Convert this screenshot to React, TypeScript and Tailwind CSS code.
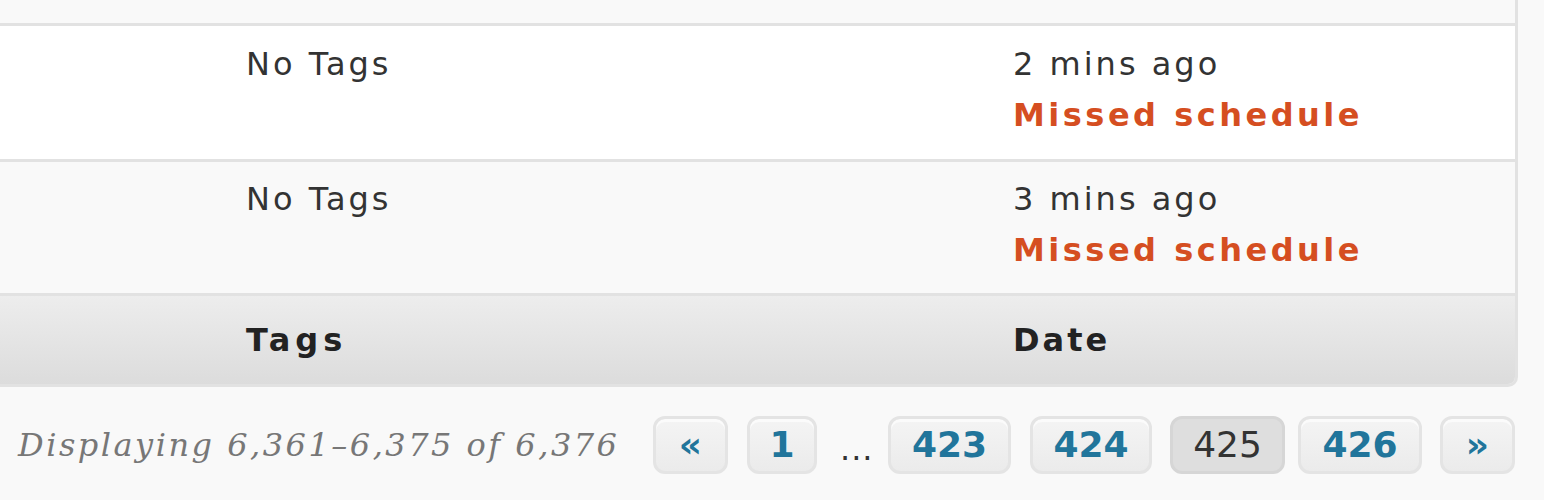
import React from "react";

const sans = "font-['DejaVu_Sans',sans-serif]";

function PageBtn({ label, w, current }: { label: string; w: string; current?: boolean }) {
  return (
    <span
      className={
        `${w} h-[58px] flex items-center justify-center rounded-[12px] border-[3px] text-[36px] leading-none ` +
        (current
          ? "bg-[#dedede] border-[#d6d6d6] text-[#333] font-normal"
          : "bg-gradient-to-b from-[#f4f4f4] to-[#ebebeb] border-[#e4e4e4] text-[#21759b] font-bold shadow-[inset_0_3px_0_#fbfbfb]")
      }
    >
      {label}
    </span>
  );
}

export default function App() {
  return (
    <div className={`w-[1544px] h-[500px] bg-[#f9f9f9] overflow-hidden ${sans} text-[#333]`}>
      <div className="w-[1518px] border-r-[3px] border-b-[3px] border-[#e2e2e2] rounded-br-[10px] overflow-hidden">
        <div className="h-[26px] bg-[#f9f9f9] border-b-[3px] border-[#e2e2e2]" />
        <div className="h-[136px] bg-white border-b-[3px] border-[#e2e2e2] flex pt-[13px] text-[32px] leading-[51px] tracking-[3px]">
          <div className="w-[246px]" />
          <div className="w-[767px]">No Tags</div>
          <div className="flex-1">
            <div>2 mins ago</div>
            <div className="font-bold text-[#d54e21] tracking-[3.5px]">Missed schedule</div>
          </div>
        </div>
        <div className="h-[134px] bg-[#f9f9f9] border-b-[3px] border-[#e2e2e2] flex pt-[12px] text-[32px] leading-[51px] tracking-[3px]">
          <div className="w-[246px]" />
          <div className="w-[767px]">No Tags</div>
          <div className="flex-1">
            <div>3 mins ago</div>
            <div className="font-bold text-[#d54e21] tracking-[3.5px]">Missed schedule</div>
          </div>
        </div>
        <div className="h-[88px] bg-gradient-to-b from-[#ededed] to-[#dcdcdc] flex items-center text-[32px] leading-[32px] font-bold text-[#222]">
          <div className="w-[246px]" />
          <div className="w-[767px] tracking-[5px]">Tags</div>
          <div className="flex-1 tracking-[3px]">Date</div>
        </div>
      </div>
      <div className="h-[116px] flex items-center pr-[29px]">
        <div className="flex-1 pl-[18px] font-['DejaVu_Serif',serif] italic text-[32px] text-[#777] tracking-[2.5px] whitespace-nowrap">
          Displaying 6,361–6,375 of 6,376
        </div>
        <PageBtn label="«" w="w-[75px]" />
        <span className="ml-[19px]"><PageBtn label="1" w="w-[70px]" /></span>
        <span className="ml-[23px] w-[32px] text-[32px] text-[#333] leading-none pt-[8px] tracking-[1px]">...</span>
        <span className="ml-[16px]"><PageBtn label="423" w="w-[123px]" /></span>
        <span className="ml-[19px]"><PageBtn label="424" w="w-[122px]" /></span>
        <span className="ml-[18px]"><PageBtn label="425" w="w-[115px]" current /></span>
        <span className="ml-[13px]"><PageBtn label="426" w="w-[124px]" /></span>
        <span className="ml-[18px]"><PageBtn label="»" w="w-[75px]" /></span>
      </div>
    </div>
  );
}
